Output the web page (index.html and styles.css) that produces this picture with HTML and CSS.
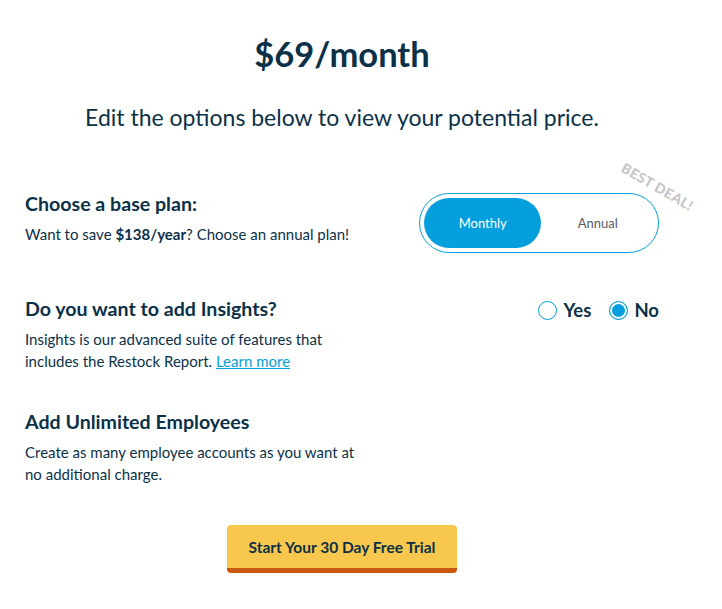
FILE: index.html
```html
<!DOCTYPE html>
<html lang="en">
<head>
<meta charset="utf-8">
<title>Pricing</title>
<link rel="stylesheet" href="styles.css">
</head>
<body>
<main class="page">
  <h1 class="price">$69/month</h1>
  <p class="lead">Edit the options below to view your potential price.</p>

  <section class="row row-plan">
    <div class="info">
      <h2 class="heading">Choose a base plan:</h2>
      <p class="desc">Want to save <strong>$138/year</strong>? Choose an annual plan!</p>
    </div>
    <div class="control">
      <div class="toggle">
        <span class="opt opt-active">Monthly</span>
        <span class="opt">Annual</span>
        <span class="badge">BEST DEAL!</span>
      </div>
    </div>
  </section>

  <section class="row row-insights">
    <div class="info">
      <h2 class="heading">Do you want to add Insights?</h2>
      <p class="desc">Insights is our advanced suite of features that includes the Restock Report. <a href="#" class="link">Learn more</a></p>
    </div>
    <div class="control radios">
      <label class="radio"><span class="dot"></span>Yes</label>
      <label class="radio"><span class="dot dot-on"></span>No</label>
    </div>
  </section>

  <section class="row row-employees">
    <div class="info">
      <h2 class="heading">Add Unlimited Employees</h2>
      <p class="desc">Create as many employee accounts as you want at no additional charge.</p>
    </div>
  </section>

  <div class="cta-wrap">
    <a href="#" class="cta">Start Your 30 Day Free Trial</a>
  </div>
</main>
</body>
</html>
```
FILE: styles.css
```css
* { box-sizing: border-box; }
html, body { margin: 0; padding: 0; background: #ffffff; }
body {
  font-family: Lato, "Open Sans", sans-serif;
  color: #0b3149;
}
.page {
  width: 634px;
  margin-left: 25px;
  padding-top: 32px;
}
.price {
  margin: 0;
  text-align: center;
  font-size: 34.5px;
  line-height: 44px;
  font-weight: 700;
}
.lead {
  margin: 26px 0 0;
  text-align: center;
  font-size: 23px;
  line-height: 30px;
  font-weight: 400;
}
.row {
  display: flex;
  justify-content: space-between;
  align-items: flex-start;
}
.row-plan { margin-top: 60px; }
.row-insights { margin-top: 44px; }
.row-employees { margin-top: 38px; }
.info { width: 338px; }
.heading {
  margin: 0;
  font-size: 19.6px;
  line-height: 24px;
  font-weight: 700;
}
.desc {
  margin: 7px 0 0;
  font-size: 15px;
  line-height: 22px;
}
.desc strong { font-weight: 700; }
.link { color: #069fdd; text-decoration: underline; }

.control { position: relative; }
.toggle {
  position: relative;
  width: 240px;
  height: 60px;
  margin-top: 1px;
  border: 1px solid #069fdd;
  border-radius: 30px;
  padding: 4px;
  display: flex;
}
.opt {
  width: 115px;
  height: 50px;
  border-radius: 25px;
  display: flex;
  align-items: center;
  justify-content: center;
  font-size: 13px;
  color: #555b61;
}
.opt-active {
  width: 120px;
  background: #069fdd;
  color: #ffffff;
}
.badge {
  position: absolute;
  left: 207px;
  top: -35px;
  transform: rotate(30deg);
  transform-origin: left top;
  font-size: 14px;
  font-weight: 900;
  color: #c6c6c6;
  letter-spacing: 0.4px;
  white-space: nowrap;
}
.radios {
  display: flex;
  gap: 18px;
  margin-top: 3px;
}
.radio {
  display: flex;
  align-items: center;
  gap: 6px;
  font-size: 18.5px;
  font-weight: 700;
  line-height: 20px;
}
.dot {
  width: 19px;
  height: 19px;
  border-radius: 50%;
  border: 1.5px solid #069fdd;
  background: #ffffff;
}
.dot-on {
  background: #069fdd;
  box-shadow: inset 0 0 0 2px #ffffff;
}
.cta-wrap {
  display: flex;
  justify-content: center;
  margin-top: 40px;
}
.cta {
  width: 230px;
  height: 48px;
  display: flex;
  align-items: center;
  justify-content: center;
  background: #f8c74d;
  border-bottom: 5px solid #c9580f;
  border-radius: 4px;
  color: #0b3149;
  font-size: 15.5px;
  font-weight: 700;
  text-decoration: none;
  padding-top: 1px;
}
```
